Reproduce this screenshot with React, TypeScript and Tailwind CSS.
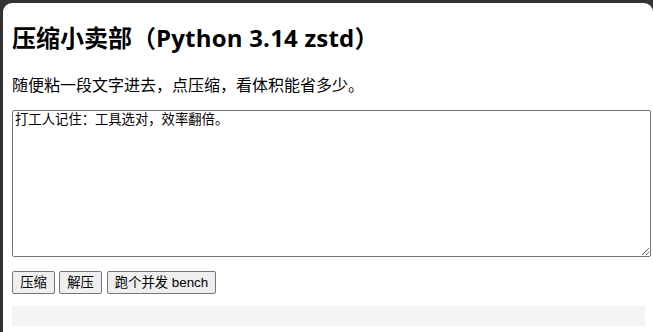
export default function App() {
  return (
    <div className="w-[653px] h-[332px] bg-[#333333] pl-[3px] pt-[3px] overflow-hidden">
      <div
        className="h-full bg-white rounded-tl-[9px] rounded-tr-[9px] pl-[9px] pr-[8px] pt-[19px]"
        style={{ fontFamily: '"Open Sans", "Noto Sans CJK SC", sans-serif' }}
      >
        <h1 className="text-[24px] leading-[32px] font-bold text-black">
          压缩小卖部（<span className="tracking-[0.2px]">Python 3.14 zstd</span>）
        </h1>
        <p className="mt-[20px] text-[16px] leading-[22px] text-black">随便粘一段文字进去，点压缩，看体积能省多少。</p>
        <textarea
          className="mt-[14px] block box-content w-full h-[141px] border border-[#767676] rounded-[2px] p-[2px] text-[13.33px] leading-[16px] text-black resize-y"
          style={{ fontFamily: '"Liberation Mono", "Noto Sans CJK SC", monospace' }}
          defaultValue="打工人记住：工具选对，效率翻倍。"
        />
        <div
          className="mt-[14px] flex text-[13.33px]"
          style={{ fontFamily: '"Liberation Sans", "Noto Sans CJK SC", sans-serif' }}
        >
          <button className="w-[43px] h-[23px] bg-[#efefef] border border-[#767676] rounded-[2px] text-black leading-[19px]">压缩</button>
          <button className="ml-[4px] w-[43px] h-[23px] bg-[#efefef] border border-[#767676] rounded-[2px] text-black leading-[19px]">解压</button>
          <button className="ml-[5px] w-[109px] h-[23px] bg-[#efefef] border border-[#767676] rounded-[2px] text-black leading-[19px]">跑个并发 bench</button>
        </div>
        <div className="mt-[12px] h-[20px] bg-[#f4f4f4]" />
      </div>
    </div>
  );
}
